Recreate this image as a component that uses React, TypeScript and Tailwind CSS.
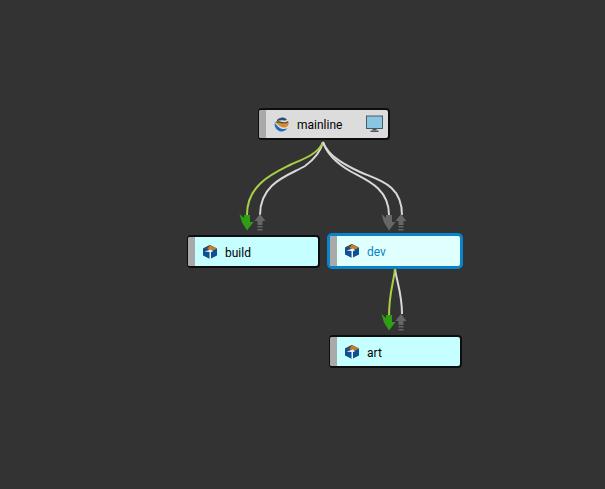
import type { ReactNode } from "react";

const FONT = "font-['Roboto','Open_Sans',sans-serif]";

function StreamIcon() {
  return (
    <svg width="14" height="14" viewBox="0 0 14 14" className="shrink-0">
      <path d="M0 3.5 L7 0 L14 3.5 L14 10.5 L7 14 L0 10.5 Z" fill="#0f4f94" />
      <path d="M0 3.5 L7 0 L5.5 5 Z" fill="#4a4a4a" />
      <path d="M7 0 L14 3.5 L9 6 L4.5 4 Z" fill="#c47f2c" />
      <path d="M1.5 6.5 L8 4.5 L10 6.5 L8 7 L8 14 L6.5 14 L6.5 7 Z" fill="#eaf6fb" />
    </svg>
  );
}

function DepotIcon() {
  return (
    <svg width="15" height="15" viewBox="0 0 15 15" className="shrink-0">
      <path d="M3 3 C5 0 10 -0.5 12.5 2 C13 3 12 3.6 10 3.4 C7.5 3 5 3.2 3 4.2 Z" fill="#2a4f6c" />
      <path d="M1.5 5 C4.5 3.5 6.5 6 9 6.5 C11 6.8 13 5.8 14.2 4.2 C15.5 7 14 10 11 10.5 C8 11 5 9 1.5 5.5 Z" fill="#d98a2b" />
      <path d="M1.5 5 C4.5 3.4 7 5 9.5 5.2 C11.5 5.3 13 5 14 4 L14.4 5 C12.5 6.6 10.5 6.8 8.5 6.4 C6 5.8 4 4.8 1.5 5.8 Z" fill="#4a4238" />
      <path d="M0.8 6 C3 8.5 5 11.5 9 12 C11 12.2 12.5 11.8 13.5 11 C11.5 14.5 7 15.8 3.8 13.2 C1.2 11.2 0.2 8.5 0.8 6 Z" fill="#1c6cc0" />
    </svg>
  );
}

function MonitorIcon() {
  return (
    <svg width="17" height="18" viewBox="0 0 17 18" className="shrink-0">
      <rect x="0.5" y="1" width="16" height="12.5" fill="#88c6e2" stroke="#4c5a60" strokeWidth="1" />
      <rect x="6.5" y="14" width="4" height="1.5" fill="#4c5a60" />
      <rect x="4.5" y="15.5" width="8" height="1.5" fill="#4c5a60" />
    </svg>
  );
}

function StreamNode(props: {
  name: string;
  icon: ReactNode;
  className: string;
  trailing?: ReactNode;
}) {
  return (
    <div className={`absolute flex overflow-hidden ${props.className}`}>
      <div className="w-[7px] shrink-0 bg-[#a9a9a9]" />
      <div className="ml-[8px] flex flex-1 items-center gap-[8px] pr-[5px]">
        {props.icon}
        <span className={`${FONT} flex-1 pt-[2px] text-[12px] leading-none`}>{props.name}</span>
        {props.trailing}
      </div>
    </div>
  );
}

function DownArrow({ x, y, color }: { x: number; y: number; color: string }) {
  return (
    <path
      transform={`translate(${x} ${y})`}
      d="M-7.5 -1 L-3 3 L-3 0 L3 0 L3 7 L6.5 7 L0 15.5 L-5 7.5 Z"
      fill={color}
    />
  );
}

function UpArrow({ x, y }: { x: number; y: number }) {
  return (
    <g transform={`translate(${x} ${y})`} fill="#666666">
      <path d="M0 0 L5.5 7 L2.5 7 L2.5 11 L-2.5 11 L-2.5 7 L-5.5 7 Z" />
      <rect x="-2.5" y="12" width="5" height="1.5" />
      <rect x="-2.5" y="15" width="5" height="1.5" />
    </g>
  );
}

export default function App() {
  return (
    <div className="relative h-[489px] w-[605px] overflow-hidden bg-[#333333]">
      <svg width="605" height="489" className="absolute left-0 top-0" fill="none" strokeWidth="2">
        <path d="M323 142 C320 154 312 161 305 166 C290 175 260 182 260 215" stroke="#d8d8d8" />
        <path d="M323 142 C318 155 300 160 290 165 C272 174 247 185 247 215" stroke="#a6d048" />
        <path d="M323 142 C327 155 338 164 350 171 C364 179 389 187 389 215" stroke="#d8d8d8" />
        <path d="M323 142 C328 156 345 165 360 172 C378 180 402 184 402 215" stroke="#d8d8d8" />
        <path d="M395 268 C396 280 402 292 402 314" stroke="#d8d8d8" />
        <path d="M395 268 C394 282 389 292 389 316" stroke="#a6d048" />
        <DownArrow x={247} y={215} color="#2e9e14" />
        <UpArrow x={260} y={214} />
        <DownArrow x={389} y={215} color="#666666" />
        <UpArrow x={401} y={214} />
        <DownArrow x={389} y={315} color="#2e9e14" />
        <UpArrow x={401} y={314} />
      </svg>

      <StreamNode
        name="mainline"
        icon={<DepotIcon />}
        trailing={<MonitorIcon />}
        className="left-[258px] top-[108px] h-[32px] w-[132px] rounded-[4px] border-2 border-l border-[#0d0d0d] bg-[#dcdcdc] text-[#000000]"
      />
      <StreamNode
        name="build"
        icon={<StreamIcon />}
        className="left-[187px] top-[235px] h-[33px] w-[133px] rounded-[4px] border-2 border-l border-[#0d0d0d] bg-[#c6ffff] text-[#000000]"
      />
      <StreamNode
        name="dev"
        icon={<StreamIcon />}
        className="left-[327px] top-[233px] h-[36px] w-[136px] rounded-[5px] border-[3px] border-[#0a84c8] bg-[#e0ffff] text-[#0a84c8]"
      />
      <StreamNode
        name="art"
        icon={<StreamIcon />}
        className="left-[329px] top-[335px] h-[33px] w-[133px] rounded-[4px] border-2 border-l border-[#0d0d0d] bg-[#c6ffff] text-[#000000]"
      />
    </div>
  );
}
